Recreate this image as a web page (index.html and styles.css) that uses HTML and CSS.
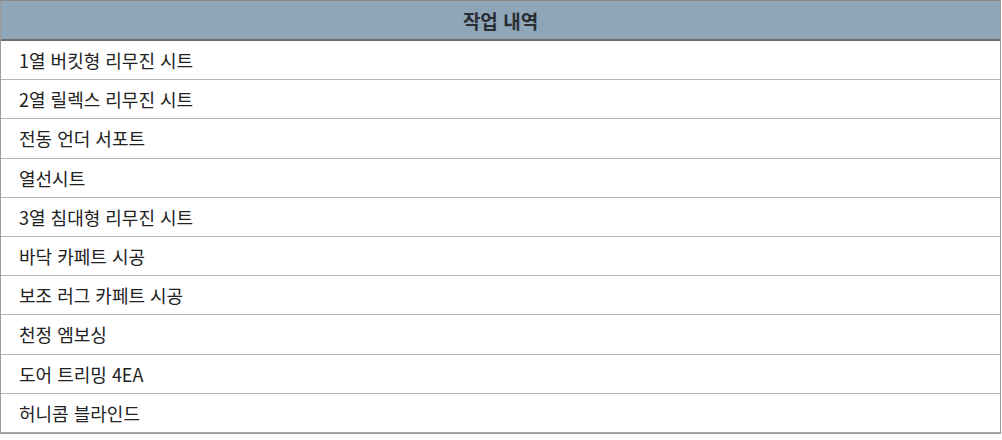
FILE: index.html
```html
<!DOCTYPE html>
<html lang="ko">
<head>
<meta charset="utf-8">
<link rel="stylesheet" href="styles.css">
</head>
<body>
<div class="table">
  <div class="head">작업 내역</div>
  <div class="row">1열 버킷형 리무진 시트</div>
  <div class="row">2열 릴렉스 리무진 시트</div>
  <div class="row">전동 언더 서포트</div>
  <div class="row">열선시트</div>
  <div class="row">3열 침대형 리무진 시트</div>
  <div class="row">바닥 카페트 시공</div>
  <div class="row">보조 러그 카페트 시공</div>
  <div class="row">천정 엠보싱</div>
  <div class="row">도어 트리밍 4EA</div>
  <div class="row">허니콤 블라인드</div>
</div>
</body>
</html>
```
FILE: styles.css
```css
html, body {
  margin: 0;
  padding: 0;
  background: #fff;
}
.table {
  width: 999px;
  border: 1px solid #9a9a9a;
  border-top: 1px solid #8a8a8a;
  font-family: "Noto Sans CJK KR", "Noto Sans", sans-serif;
  color: #222;
}
.head {
  height: 38px;
  background: #8fa5b8;
  border-bottom: 2px solid #6a6e72;
  display: flex;
  align-items: center;
  justify-content: center;
  font-size: 19px;
  font-weight: 700;
  color: #2a2e33;
}
.row {
  height: 38.2px;
  border-bottom: 1px solid #b4b4b4;
  display: flex;
  align-items: center;
  padding-left: 18px;
  font-size: 18px;
}
.row:last-child {
  border-bottom: 1px solid #a8a8a8;
}
```
